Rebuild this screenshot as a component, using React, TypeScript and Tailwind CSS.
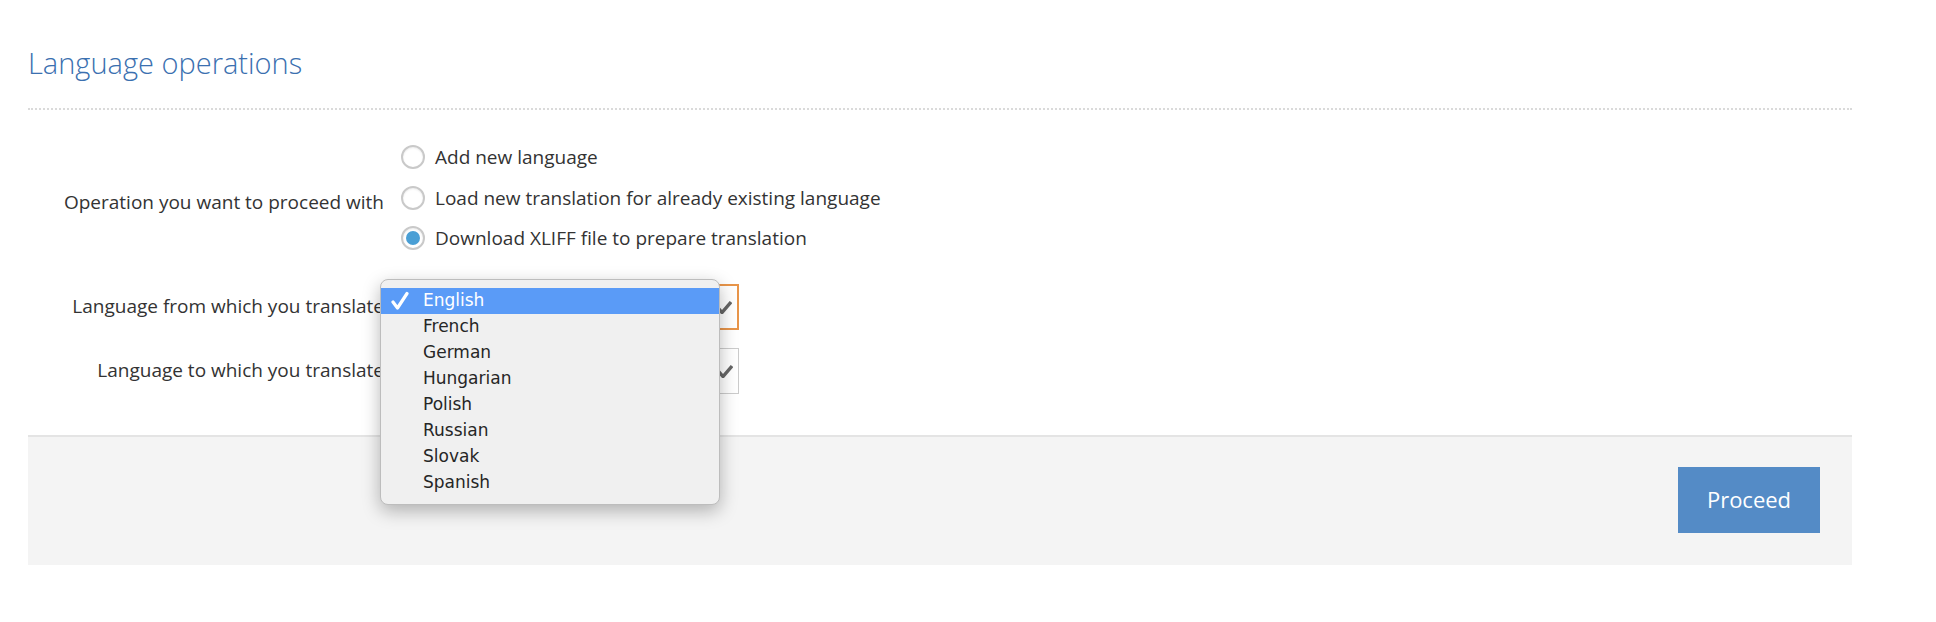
import React from "react";

const font = { fontFamily: '"Open Sans", sans-serif' };

function Radio({ checked, label }: { checked?: boolean; label: string }) {
  return (
    <div className="flex h-[40.5px] items-center">
      <span className="flex h-[24px] w-[24px] items-center justify-center rounded-full border-2 border-[#c9c9c9] bg-white shadow-[inset_0_1px_2px_rgba(0,0,0,0.08)]">
        {checked && <span className="h-[14px] w-[14px] rounded-full bg-[#4a9fd5]" />}
      </span>
      <span className="ml-[10px] text-[19px] text-[#333]">{label}</span>
    </div>
  );
}

function Chevron() {
  return (
    <svg className="absolute right-[5px] top-1/2 -translate-y-1/2" width="20" height="14" viewBox="0 0 20 14">
      <path d="M1 2 L10 12.5 L19 2" fill="none" stroke="#666" strokeWidth="3.4" strokeLinecap="butt" strokeLinejoin="miter" />
    </svg>
  );
}

const langs = ["English", "French", "German", "Hungarian", "Polish", "Russian", "Slovak", "Spanish"];

export default function App() {
  return (
    <div className="h-[622px] w-[1936px] overflow-hidden bg-white" style={font}>
      <div className="ml-[28px] w-[1824px] pt-[48px]">
        <h1 className="h-[30px] text-[29px] font-light leading-none text-[#3b70b0]">Language operations</h1>
        <div className="mt-[30px] border-t-2 border-dotted border-[#dadada]" />

        <div className="mt-[27px] flex">
          <div className="flex w-[356px] items-center justify-end pt-[8px] text-[19px] text-[#333]">
            Operation you want to proceed with
          </div>
          <div className="ml-[17px] flex flex-col">
            <Radio label="Add new language" />
            <Radio label="Load new translation for already existing language" />
            <Radio checked label="Download XLIFF file to prepare translation" />
          </div>
        </div>

        <div className="mt-[25px] flex items-center">
          <div className="w-[356px] text-right text-[19px] text-[#333]">Language from which you translate</div>
          <div className="relative ml-[17px] h-[46px] w-[338px] border-2 border-[#e8954a] bg-white">
            <Chevron />
            <div
              className="absolute left-[-23px] top-[-7px] z-10 w-[340px] rounded-[8px] border border-[#bdbdbd] bg-[#f0f0f0] pb-[8px] pt-[8px] shadow-[0_6px_18px_rgba(0,0,0,0.28)]"
              style={{ fontFamily: '"DejaVu Sans", sans-serif' }}
            >
              {langs.map((l, i) => (
                <div
                  key={l}
                  className={
                    i === 0
                      ? "relative flex h-[26px] items-center bg-[#5a9bf7] pl-[42px] text-[17px] text-white"
                      : "flex h-[26px] items-center pl-[42px] text-[17px] text-[#262626]"
                  }
                >
                  {i === 0 && (
                    <svg className="absolute left-[10px] top-[3px]" width="18" height="20" viewBox="0 0 18 20">
                      <path d="M2 11 L6.5 17 L16 2.5" fill="none" stroke="#fff" strokeWidth="3.2" strokeLinecap="round" strokeLinejoin="round" />
                    </svg>
                  )}
                  {l}
                </div>
              ))}
            </div>
          </div>
        </div>

        <div className="mt-[18px] flex items-center">
          <div className="w-[356px] text-right text-[19px] text-[#333]">Language to which you translate</div>
          <div className="relative ml-[17px] h-[46px] w-[338px] border-[1.5px] border-[#cccccc] bg-white">
            <Chevron />
          </div>
        </div>

        <div className="mt-[41px] flex justify-end border-t-2 border-[#e4e4e4] bg-[#f4f4f4] pb-[32px] pr-[32px] pt-[30px]">
          <button className="h-[66px] w-[142px] bg-[#548bc6] text-[22px] text-white">Proceed</button>
        </div>
      </div>
    </div>
  );
}
